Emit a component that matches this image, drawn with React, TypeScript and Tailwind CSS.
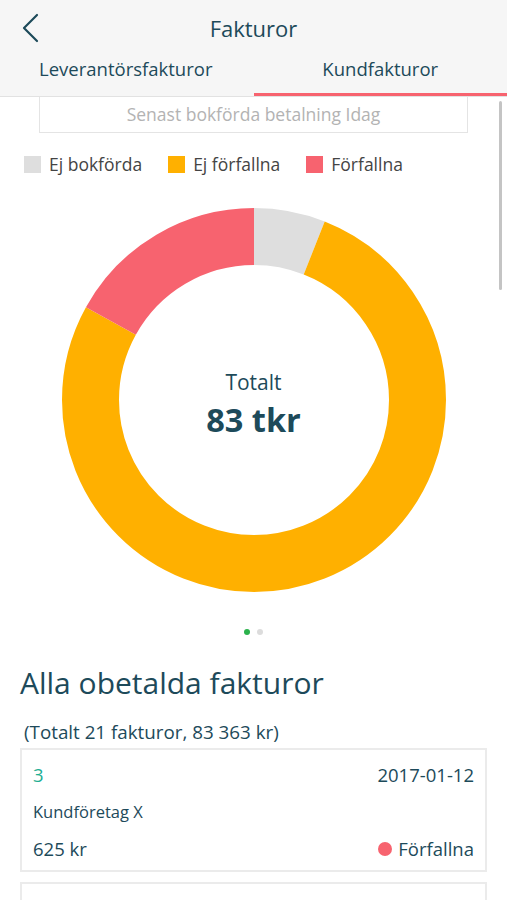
import React from 'react'

const segments = [
  { label: 'Ej bokförda', color: '#dedede', share: 0.06 },
  { label: 'Ej förfallna', color: '#ffb000', share: 0.77 },
  { label: 'Förfallna', color: '#f7636f', share: 0.17 },
]

function Donut() {
  const r = 163.5
  const c = 2 * Math.PI * r
  let offset = 0
  return (
    <div className="relative mx-auto h-[384px] w-[384px]">
      <svg width="384" height="384" viewBox="0 0 384 384" className="-rotate-90">
        {segments.map((s) => {
          const len = s.share * c
          const el = (
            <circle
              key={s.label}
              cx="192"
              cy="192"
              r={r}
              fill="none"
              stroke={s.color}
              strokeWidth="57"
              strokeDasharray={`${len} ${c - len}`}
              strokeDashoffset={-offset}
            />
          )
          offset += len
          return el
        })}
      </svg>
      <div className="absolute inset-0 flex flex-col items-center justify-center pt-[10px] text-[#1d4a5a]">
        <div className="text-[21px] leading-[29px]">Totalt</div>
        <div className="mt-[1px] text-[32.5px] font-bold leading-[44px]">83 tkr</div>
      </div>
    </div>
  )
}

export default function App() {
  return (
    <div
      className="relative h-[900px] w-[507px] overflow-hidden bg-white text-[#1d4a5a]"
      style={{ fontFamily: '"Open Sans", "Noto Sans", sans-serif' }}
    >
      {/* Header */}
      <div className="border-b border-[#e2e2e2] bg-[#f6f6f6]">
        <div className="relative flex h-[54px] items-center justify-center pt-[2px]">
          <svg
            className="absolute left-[20px] top-[13px]"
            width="20"
            height="30"
            viewBox="0 0 20 30"
            fill="none"
            stroke="#1d4a5a"
            strokeWidth="2.2"
            strokeLinecap="round"
            strokeLinejoin="round"
          >
            <path d="M17 2 L4 15 L17 28" />
          </svg>
          <span className="text-[22px]">Fakturor</span>
        </div>
        <div className="flex h-[42px]">
          <div className="flex flex-1 items-start justify-center pt-[2px] text-[18.5px] leading-[26px]">
            <span className="-ml-[2px]">Leverantörsfakturor</span>
          </div>
          <div className="flex flex-1 items-start justify-center border-b-[3px] border-[#f7636f] pt-[2px] text-[18.5px] leading-[26px]">
            Kundfakturor
          </div>
        </div>
      </div>

      {/* Content */}
      <div className="mx-[39px] flex h-[36px] items-center justify-center border border-t-0 border-[#e4e4e4] text-[17.5px] text-[#b3b3b3]">
        Senast bokförda betalning Idag
      </div>

      <div className="mt-[21px] flex items-center px-[24px] text-[17.5px] leading-[20px]">
        {segments.map((s, i) => (
          <div key={s.label} className={`flex items-center ${i > 0 ? 'ml-[26px]' : ''}`}>
            <span className="mr-[8px] h-[17px] w-[17px]" style={{ backgroundColor: s.color }} />
            <span className="text-[#444]">{s.label}</span>
          </div>
        ))}
      </div>

      <div className="mt-[34px]">
        <Donut />
      </div>

      <div className="mt-[37px] flex justify-center gap-[7px]">
        <span className="h-[6px] w-[6px] rounded-full bg-[#2bb24c]" />
        <span className="h-[6px] w-[6px] rounded-full bg-[#dcdcdc]" />
      </div>

      <h2 className="mt-[28px] px-[20px] text-[30px] leading-[40px]">Alla obetalda fakturor</h2>
      <div className="mt-[17px] px-[24px] text-[18.8px] leading-[24px]">(Totalt 21 fakturor, 83 363 kr)</div>

      <div className="mx-[20px] mt-[4px] border-2 border-[#ebebeb] px-[11px] pb-[8px] pt-[12px]">
        <div className="flex items-center justify-between text-[18.5px] leading-[26px]">
          <span className="text-[#1fae93]">3</span>
          <span>2017-01-12</span>
        </div>
        <div className="mt-[11px] text-[16.5px] leading-[26px]">Kundföretag X</div>
        <div className="mt-[11px] flex items-center justify-between text-[18.5px] leading-[26px]">
          <span>625 kr</span>
          <span className="flex items-center">
            <span className="mr-[6px] h-[14px] w-[14px] rounded-full bg-[#f7636f]" />
            Förfallna
          </span>
        </div>
      </div>

      <div className="mx-[20px] mt-[10px] h-[60px] border-2 border-[#ebebeb]" />

      {/* Scrollbar */}
      <div className="absolute left-[499px] top-[101px] h-[189px] w-[3px] rounded-full bg-[#c4c4c4]" />
    </div>
  )
}
